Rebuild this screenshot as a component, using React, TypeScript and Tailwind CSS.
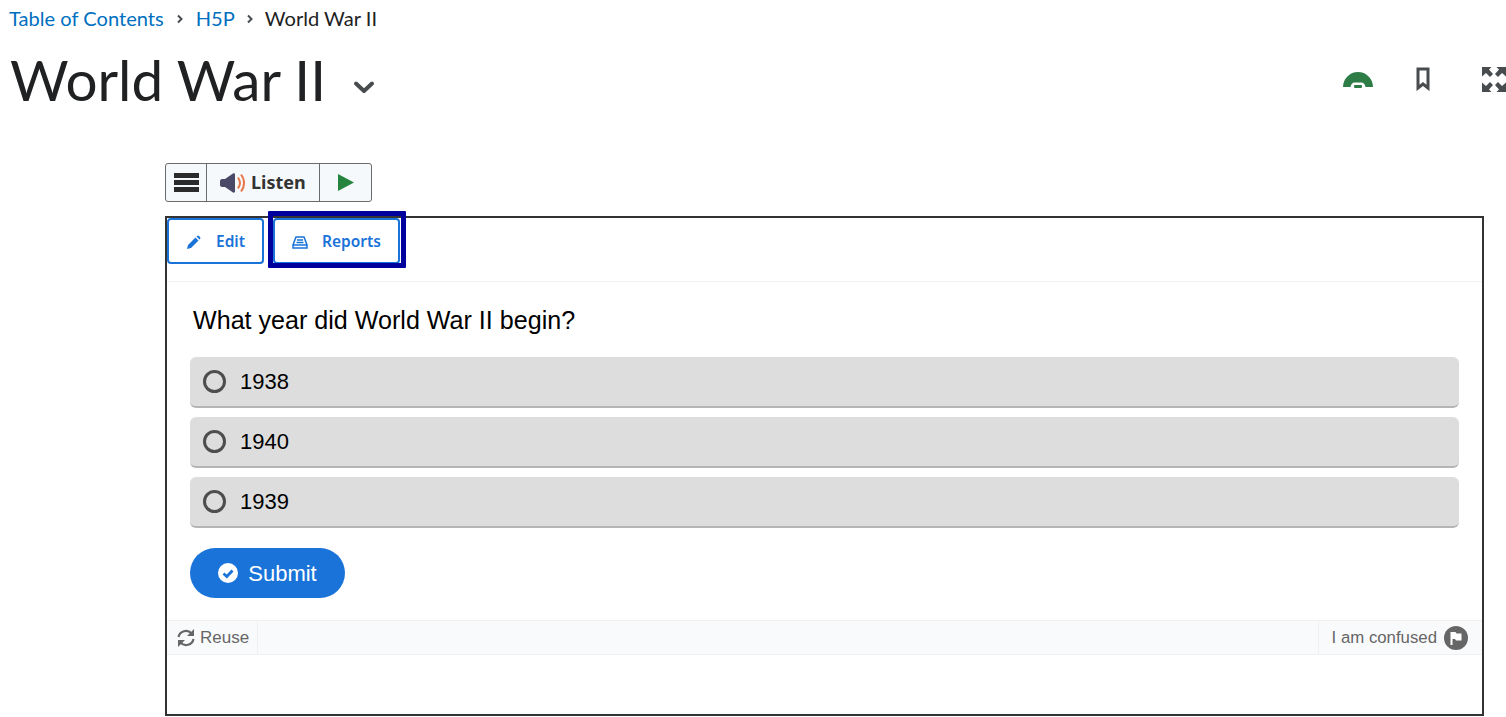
import React from "react";

const answers = ["1938", "1940", "1939"];

const App = () => {
    return (
        <div className="h-[717px] w-[1506px] overflow-hidden bg-white font-['Lato',sans-serif]">
            <nav className="flex h-[37px] items-center pl-[9px] text-[20.1px] leading-[37px] text-[#202122]">
                <a className="text-[#006fbf]">Table of Contents</a>
                <svg className="mx-[9px] mt-px" width="14" height="14" viewBox="0 0 14 14" fill="none" stroke="#494c4e" strokeWidth="2">
                    <path d="M5 3.5 8.5 7 5 10.5" />
                </svg>
                <a className="text-[#006fbf]">H5P</a>
                <svg className="mx-[8px] mt-px" width="14" height="14" viewBox="0 0 14 14" fill="none" stroke="#494c4e" strokeWidth="2">
                    <path d="M5 3.5 8.5 7 5 10.5" />
                </svg>
                <span>World War II</span>
            </nav>

            <header className="flex h-[86px] items-start justify-between pl-[10px]">
                <div className="flex items-center">
                    <h1 className="text-[56.6px] font-normal leading-[85px] text-[#202122]">World War II</h1>
                    <svg className="ml-[27px] mt-[15px]" width="22" height="14" viewBox="0 0 22 14" fill="none" stroke="#494c4e" strokeWidth="4" strokeLinecap="round" strokeLinejoin="round">
                        <path d="M3 3.500 11 11 19 3.500" />
                    </svg>
                </div>
                <div className="flex items-start pt-[30px]">
                    <svg className="mt-[5px]" width="30" height="17" viewBox="0 0 30 17">
                        <path d="M0 15A15 15 0 0 1 30 15H22.500c-.5-3-2-4.500-4-4.500h-7c-2 0-3.500 1.500-4 4.500Z" fill="#2e7d46" />
                        <rect x="11" y="13" width="8" height="3" rx="1" fill="#2e7d46" />
                    </svg>
                    <svg className="ml-[43px]" width="14" height="24" viewBox="0 0 14 24" fill="none" stroke="#494c4e" strokeWidth="3">
                        <path d="M2 2h10v19l-5-4-5 4Z" />
                    </svg>
                    <svg className="ml-[52px] shrink-0" width="24" height="25" viewBox="0 0 24 25" fill="#494c4e">
                        <path d="M0 0h9.500L7 2.500 11 7 8 10 4 6 0 9.500ZM24 0h-9.500L17 2.500 13 7l3 3 4-4 4 3.500ZM0 25h9.500L7 22.500 11 18l-3-3-4 4-4-3.500ZM24 25h-9.500l2.500-2.500L13 18l3-3 4 4 4-3.500Z" />
                    </svg>
                </div>
            </header>

            <main className="ml-[165px] mt-[40px] w-[1319px]">
                <div className="flex h-[39px] w-[207px] items-stretch rounded-[3px] border border-[#6b6b6b] bg-[#f6f9fc] font-['Noto_Sans',sans-serif]">
                    <div className="flex w-[41px] items-center justify-center border-r border-[#6b6b6b]">
                        <div className="flex w-[25px] flex-col gap-[2px]">
                            <div className="h-[5px] bg-[#2b2b2b]"></div>
                            <div className="h-[5px] bg-[#2b2b2b]"></div>
                            <div className="h-[5px] bg-[#2b2b2b]"></div>
                        </div>
                    </div>
                    <div className="flex w-[113px] items-center gap-[6px] border-r border-[#6b6b6b] pl-[13px]">
                        <svg width="25" height="20" viewBox="0 0 25 20">
                            <path d="M0 8C0 7 1 6 2 6h3l8-5.500c1-.5 2 0 2 1v17c0 1-1 1.500-2 1L5 14H2c-1 0-2-1-2-2Z" fill="#4a4a68" />
                            <path d="M18 4.500c2.500 3.500 2.500 7.500 0 11M21 1.500c4 5 4 12 0 17" fill="none" stroke="#e8784a" strokeWidth="2" />
                        </svg>
                        <span className="text-[18px] font-bold text-[#333333]">Listen</span>
                    </div>
                    <div className="flex flex-1 items-center justify-center">
                        <svg width="16" height="17" viewBox="0 0 16 17">
                            <path d="M0 0 16 8.500 0 17Z" fill="#25853f" />
                        </svg>
                    </div>
                </div>

                <section className="mt-[14px] h-[500px] border-2 border-[#333333] bg-white">
                    <div className="flex h-[64px] items-start border-b border-[#f1f1f1] font-['Noto_Sans',sans-serif] text-[15.5px] font-semibold text-[#1a73d9]">
                        <button className="flex h-[46px] w-[97px] items-center rounded-[4px] border-2 border-[#1a73d9] pl-[18px] pt-[2px]">
                            <svg width="14" height="14" viewBox="0 0 14 14" fill="#1a73d9">
                                <path d="M0 14l1-4 7.500-7.500 3 3L4 13ZM9.500 1.500l.5-.5c.5-.5 1.500-.5 2 0l1 1c.5.500.5 1.500 0 2l-.5.500Z" />
                            </svg>
                            <span className="ml-[15px]">Edit</span>
                        </button>
                        <div className="relative ml-[9px] h-[46px] w-[127px] rounded-[4px] border-2 border-[#1a73d9] pl-[17px] pt-[2px]">
                            <div className="flex h-full items-center">
                                <svg width="16" height="13" viewBox="0 0 16 13" fill="none" stroke="#1a73d9" strokeWidth="1.500">
                                    <path d="M4 1h8l3 8v3H1V9ZM1 9h14M5 4h6M4.500 6.500h7" />
                                </svg>
                                <span className="ml-[14px]">Reports</span>
                            </div>
                            <div className="absolute -bottom-[6px] -left-[7px] -right-[8px] -top-[9px] rounded-[1px] border-[5px] border-[#00009c]"></div>
                        </div>
                    </div>

                    <div className="h-[338px] pl-[23px] pr-[23px] font-['Liberation_Sans',sans-serif]">
                        <p className="pb-[23px] pl-[3px] pt-[24px] text-[25.1px] leading-[28px] text-black">What year did World War II begin?</p>
                        <div className="flex flex-col gap-[9px]">
                            {answers.map((answer) => (
                                <div key={answer} className="flex h-[51px] items-center rounded-[6px] border-b-2 border-[#b5b5b5] bg-[#dddddd] pl-[13px] text-[22px] text-black">
                                    <span className="h-[23px] w-[23px] rounded-full border-[3px] border-[#4d4d4d]"></span>
                                    <span className="ml-[14px]">{answer}</span>
                                </div>
                            ))}
                        </div>
                        <button className="mt-[20px] flex h-[50px] w-[155px] items-center justify-center gap-[10px] rounded-[25px] bg-[#1a73d9] text-[22px] text-white">
                            <svg width="20" height="20" viewBox="0 0 20 20">
                                <circle cx="10" cy="10" r="10" fill="white" />
                                <path d="M5.500 10.500 8.800 13.500 14.500 7.500" fill="none" stroke="#1a73d9" strokeWidth="2.800" />
                            </svg>
                            Submit
                        </button>
                    </div>

                    <div className="flex h-[35px] items-stretch border-y border-[#f0f0f0] bg-[#f9fafc] font-['Liberation_Sans',sans-serif] text-[17px] text-[#666666]">
                        <div className="flex items-center gap-[5px] border-r border-[#f0f0f0] pl-[10px] pr-[8px]">
                            <svg width="18" height="18" viewBox="0 0 18 18" fill="none" stroke="#666666" strokeWidth="2.200">
                                <path d="M1.500 8a7.500 7.500 0 0 1 13-3.500M16.500 10a7.500 7.500 0 0 1-13 3.500" />
                                <path d="M17 0v7h-7ZM1 18v-7h7Z" fill="#666666" stroke="none" />
                            </svg>
                            Reuse
                        </div>
                        <div className="ml-auto flex items-center gap-[7px] border-l border-[#f0f0f0] pl-[13px] pr-[14px] text-[16.8px]">
                            I am confused
                            <svg width="24" height="24" viewBox="0 0 24 24">
                                <circle cx="12" cy="12" r="12" fill="#666666" />
                                <path d="M6.500 6h5l1 1.500h5v7h-5.500l-1-1.500H8.500v6h-2Z" fill="white" />
                            </svg>
                        </div>
                    </div>
                </section>
            </main>
        </div>
    );
};

export default App;
